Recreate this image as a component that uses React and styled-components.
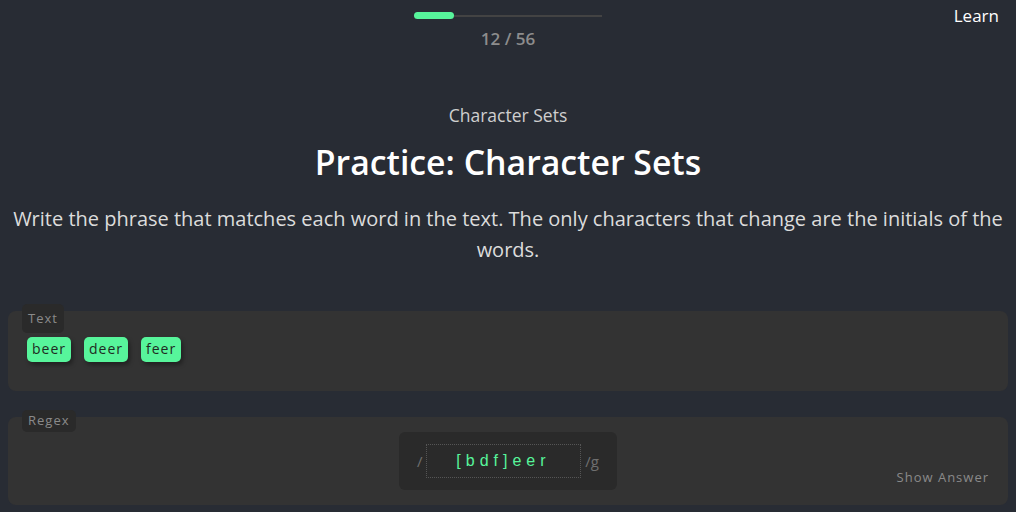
import React from "react";
import styled, { createGlobalStyle } from "styled-components";

const GlobalStyle = createGlobalStyle`
  * { box-sizing: border-box; }
  body {
    margin: 0;
    background: #282c34;
    font-family: "Open Sans", "Noto Sans", sans-serif;
    color: #fff;
  }
`;

const Page = styled.div`
  position: relative;
  min-height: 512px;
  padding: 0 8px;
`;

const Top = styled.header`
  display: flex;
  flex-direction: column;
  align-items: center;
  padding-top: 12px;
`;

const Track = styled.div`
  position: relative;
  width: 188px;
  height: 7px;
  display: flex;
  align-items: center;
  &::before {
    content: "";
    position: absolute;
    left: 0;
    right: 0;
    top: 3px;
    height: 2px;
    background: #434343;
  }
`;

const Fill = styled.div`
  position: relative;
  height: 7px;
  border-radius: 4px;
  background: #57f59b;
`;

const Count = styled.div`
  margin-top: 8px;
  font-size: 17px;
  font-weight: 600;
  color: #8d8d8d;
`;

const LearnLink = styled.a`
  position: absolute;
  top: 4px;
  right: 17px;
  font-size: 17px;
  color: #fff;
  text-decoration: none;
`;

const Intro = styled.section`
  text-align: center;
  margin-top: 53px;
`;

const Sub = styled.div`
  font-size: 17.5px;
  color: #cfcfcf;
`;

const Title = styled.h1`
  margin: 14px 0 0;
  font-size: 33.8px;
  font-weight: 600;
  line-height: 1.3;
`;

const Desc = styled.p`
  margin: 18px 0 0;
  font-size: 20px;
  line-height: 31px;
  color: #dcdcdc;
`;

const Panel = styled.section`
  position: relative;
  margin-top: ${(p) => p.$top}px;
  min-height: ${(p) => p.$h}px;
  background: #333333;
  border-radius: 8px;
  padding: ${(p) => p.$pad};
`;

const Tag = styled.span`
  position: absolute;
  top: -7px;
  left: 14px;
  padding: ${(p) => p.$pt}px 6px ${(p) => p.$pb}px;
  background: #2a2a2a;
  border-radius: 5px;
  font-size: 13px;
  line-height: 16px;
  letter-spacing: 1px;
  color: #8a8a8a;
`;

const Words = styled.div`
  display: flex;
  gap: 13px;
`;

const Chip = styled.span`
  padding: 3px 5px 4px;
  line-height: 18px;
  background: #57f59b;
  border-radius: 5px;
  color: #1f2a22;
  font-size: 14px;
  letter-spacing: 1px;
  box-shadow: 2px 3px 4px rgba(0, 0, 0, 0.35);
`;

const RegexBox = styled.div`
  display: flex;
  align-items: center;
  margin: 0 auto;
  width: 218px;
  height: 58px;
  padding: 0 18px 0 18px;
  background: #2a2a2a;
  border-radius: 6px;
  color: #6f6f6f;
  font-size: 15px;
`;

const Input = styled.div`
  flex: 1;
  height: 34px;
  margin: 0 4px 0 3px;
  border: 1px dotted #555;
  display: flex;
  align-items: center;
  justify-content: center;
  color: #57f59b;
  font-size: 16px;
  letter-spacing: 5px;
  font-family: "Liberation Sans", Arial, sans-serif;
`;

const ShowAnswer = styled.button`
  position: absolute;
  right: 19px;
  bottom: 19px;
  background: none;
  border: none;
  padding: 0;
  font-family: inherit;
  font-size: 13px;
  letter-spacing: 1px;
  color: #8a8a8a;
  cursor: pointer;
`;

const App = () => (
  <Page>
    <GlobalStyle />
    <Top>
      <Track>
        <Fill style={{ width: `${(12 / 56) * 100}%` }} />
      </Track>
      <Count>12 / 56</Count>
    </Top>
    <LearnLink href="#">Learn</LearnLink>
    <Intro>
      <Sub>Character Sets</Sub>
      <Title>Practice: Character Sets</Title>
      <Desc>
        Write the phrase that matches each word in the text. The only characters
        that change are the initials of the words.
      </Desc>
    </Intro>
    <Panel $top={46} $h={80} $pad="26px 19px">
      <Tag $pt={6} $pb={7}>Text</Tag>
      <Words>
        <Chip>beer</Chip>
        <Chip>deer</Chip>
        <Chip>feer</Chip>
      </Words>
    </Panel>
    <Panel $top={26} $h={87} $pad="15px 19px">
      <Tag $pt={2} $pb={4}>Regex</Tag>
      <RegexBox>
        <span>/</span>
        <Input>[bdf]eer</Input>
        <span>/g</span>
      </RegexBox>
      <ShowAnswer>Show Answer</ShowAnswer>
    </Panel>
  </Page>
);

export default App;
